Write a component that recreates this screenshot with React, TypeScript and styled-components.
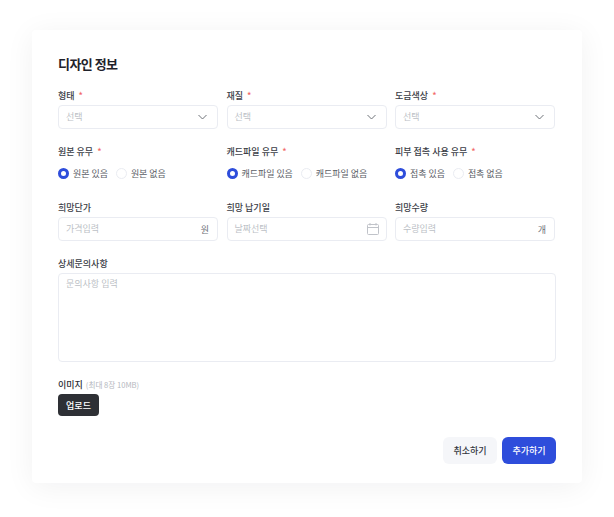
import styled, { createGlobalStyle } from "styled-components";

const GlobalStyle = createGlobalStyle`
  html, body {
    margin: 0;
    background: #fff;
    font-family: "Noto Sans CJK KR", "Noto Sans", sans-serif;
  }
`;

const Page = styled.div`
  width: 614px;
  height: 517px;
  padding: 30px 32px 0;
  box-sizing: border-box;
  overflow: hidden;
`;

const Card = styled.form`
  width: 550px;
  height: 453px;
  box-sizing: border-box;
  padding: 24px 26px 19px;
  background: #fff;
  border-radius: 4px;
  box-shadow: 0 4px 30px rgba(20, 24, 40, 0.06);
  display: flex;
  flex-direction: column;
`;

const Title = styled.h2`
  margin: 0 0 15px;
  height: 20px;
  font-size: 13px;
  line-height: 20px;
  font-weight: 700;
  letter-spacing: -0.55px;
  color: #1f222b;
`;

const Grid = styled.div`
  display: grid;
  grid-template-columns: repeat(3, 160px);
  column-gap: 8.5px;
`;

const Field = styled.div<{ $height: number }>`
  height: ${(p) => p.$height}px;
  display: flex;
  flex-direction: column;
`;

const Label = styled.label`
  height: 14px;
  font-size: 9px;
  line-height: 14px;
  font-weight: 500;
  color: #3a3d46;
  display: flex;
  align-items: center;
  white-space: nowrap;
`;

const Star = styled.span`
  margin-left: 4px;
  color: #f26a69;
  font-size: 9px;
`;

const Box = styled.div`
  height: 24px;
  box-sizing: border-box;
  margin-top: 2px;
  padding: 0 7px;
  border: 1px solid #eaecf2;
  border-radius: 4px;
  background: #fff;
  display: flex;
  align-items: center;
  justify-content: space-between;
`;

const Placeholder = styled.span`
  display: block;
  font-size: 9px;
  line-height: 14px;
  color: #bcbfc6;
`;

const Unit = styled.span`
  margin-right: 1px;
  font-size: 9px;
  color: #6f7279;
`;

const RadioRow = styled.div`
  margin-top: 7px;
  height: 14px;
  display: flex;
  align-items: center;
  gap: 8px;
`;

const RadioItem = styled.span`
  display: flex;
  align-items: center;
  gap: 4px;
  font-size: 9px;
  letter-spacing: -0.05px;
  color: #5b5e66;
  white-space: nowrap;
`;

const RadioDot = styled.span<{ $on?: boolean }>`
  width: 11px;
  height: 11px;
  border-radius: 50%;
  box-sizing: border-box;
  background: #fff;
  border: ${(p) => (p.$on ? "3px solid #2e4ddb" : "1px solid #eaecf2")};
`;

const Detail = styled.div`
  margin-top: 2px;
`;

const TextArea = styled.div`
  margin-top: 2px;
  width: 498px;
  height: 89px;
  box-sizing: border-box;
  padding: 3px 7px;
  border: 1px solid #eaecf2;
  border-radius: 4px;
`;

const ImageSection = styled.div`
  margin-top: 16px;
`;

const ImageLabel = styled.div`
  font-size: 9px;
  line-height: 14px;
  font-weight: 500;
  color: #2b2e36;
  display: flex;
  align-items: center;
  gap: 3px;
`;

const Hint = styled.span`
  font-size: 7.6px;
  font-weight: 400;
  color: #b4b7be;
`;

const UploadButton = styled.button`
  margin-top: 2px;
  display: block;
  width: 41px;
  height: 22px;
  padding: 0;
  border: 0;
  border-radius: 4px;
  background: #2e3035;
  color: #fff;
  font: 500 9px "Noto Sans CJK KR", sans-serif;
`;

const Actions = styled.div`
  margin-top: auto;
  width: 498px;
  display: flex;
  justify-content: flex-end;
  gap: 5px;
`;

const ActionButton = styled.button<{ $primary?: boolean }>`
  width: 54px;
  height: 27px;
  padding: 0;
  border: 0;
  border-radius: 6px;
  background: ${(p) => (p.$primary ? "#2e4ddb" : "#f5f6f9")};
  color: ${(p) => (p.$primary ? "#fff" : "#33363f")};
  font: 500 9px "Noto Sans CJK KR", sans-serif;
`;

const Chevron = styled.svg`
  margin-right: 3px;
`;

const ChevronIcon = () => (
  <Chevron width="9" height="6" viewBox="0 0 9 6" fill="none" stroke="#6f7279" strokeWidth="1">
    <path d="M.5 1l4 4 4-4" />
  </Chevron>
);

const CalendarIcon = () => (
  <svg width="12" height="12" viewBox="0 0 12 12" fill="none" stroke="#c0c3c9" strokeWidth="1">
    <rect x=".5" y="1.5" width="11" height="10" rx="1" />
    <path d="M.5 4.5h11M3 0v2.5M9 0v2.5" />
  </svg>
);

const selects = ["형태", "재질", "도금색상"];
const radios = [
  { label: "원본 유무", on: "원본 있음", off: "원본 없음" },
  { label: "캐드파일 유무", on: "캐드파일 있음", off: "캐드파일 없음" },
  { label: "피부 접촉 사용 유무", on: "접촉 있음", off: "접촉 없음" },
];

const App = () => (
  <Page>
    <GlobalStyle />
    <Card>
      <Title>디자인 정보</Title>
      <Grid>
        {selects.map((s) => (
          <Field key={s} $height={56}>
            <Label>
              {s}
              <Star>*</Star>
            </Label>
            <Box>
              <Placeholder>선택</Placeholder>
              <ChevronIcon />
            </Box>
          </Field>
        ))}
        {radios.map((r) => (
          <Field key={r.label} $height={56}>
            <Label>
              {r.label}
              <Star>*</Star>
            </Label>
            <RadioRow>
              <RadioItem>
                <RadioDot $on />
                {r.on}
              </RadioItem>
              <RadioItem>
                <RadioDot />
                {r.off}
              </RadioItem>
            </RadioRow>
          </Field>
        ))}
        <Field $height={54}>
          <Label>희망단가</Label>
          <Box>
            <Placeholder>가격입력</Placeholder>
            <Unit>원</Unit>
          </Box>
        </Field>
        <Field $height={54}>
          <Label>희망 납기일</Label>
          <Box>
            <Placeholder>날짜선택</Placeholder>
            <CalendarIcon />
          </Box>
        </Field>
        <Field $height={54}>
          <Label>희망수량</Label>
          <Box>
            <Placeholder>수량입력</Placeholder>
            <Unit>개</Unit>
          </Box>
        </Field>
      </Grid>
      <Detail>
        <Label>상세문의사항</Label>
        <TextArea>
          <Placeholder>문의사항 입력</Placeholder>
        </TextArea>
      </Detail>
      <ImageSection>
        <ImageLabel>
          이미지 <Hint>(최대 8장 10MB)</Hint>
        </ImageLabel>
        <UploadButton type="button">업로드</UploadButton>
      </ImageSection>
      <Actions>
        <ActionButton type="button">취소하기</ActionButton>
        <ActionButton type="button" $primary>
          추가하기
        </ActionButton>
      </Actions>
    </Card>
  </Page>
);

export default App;
